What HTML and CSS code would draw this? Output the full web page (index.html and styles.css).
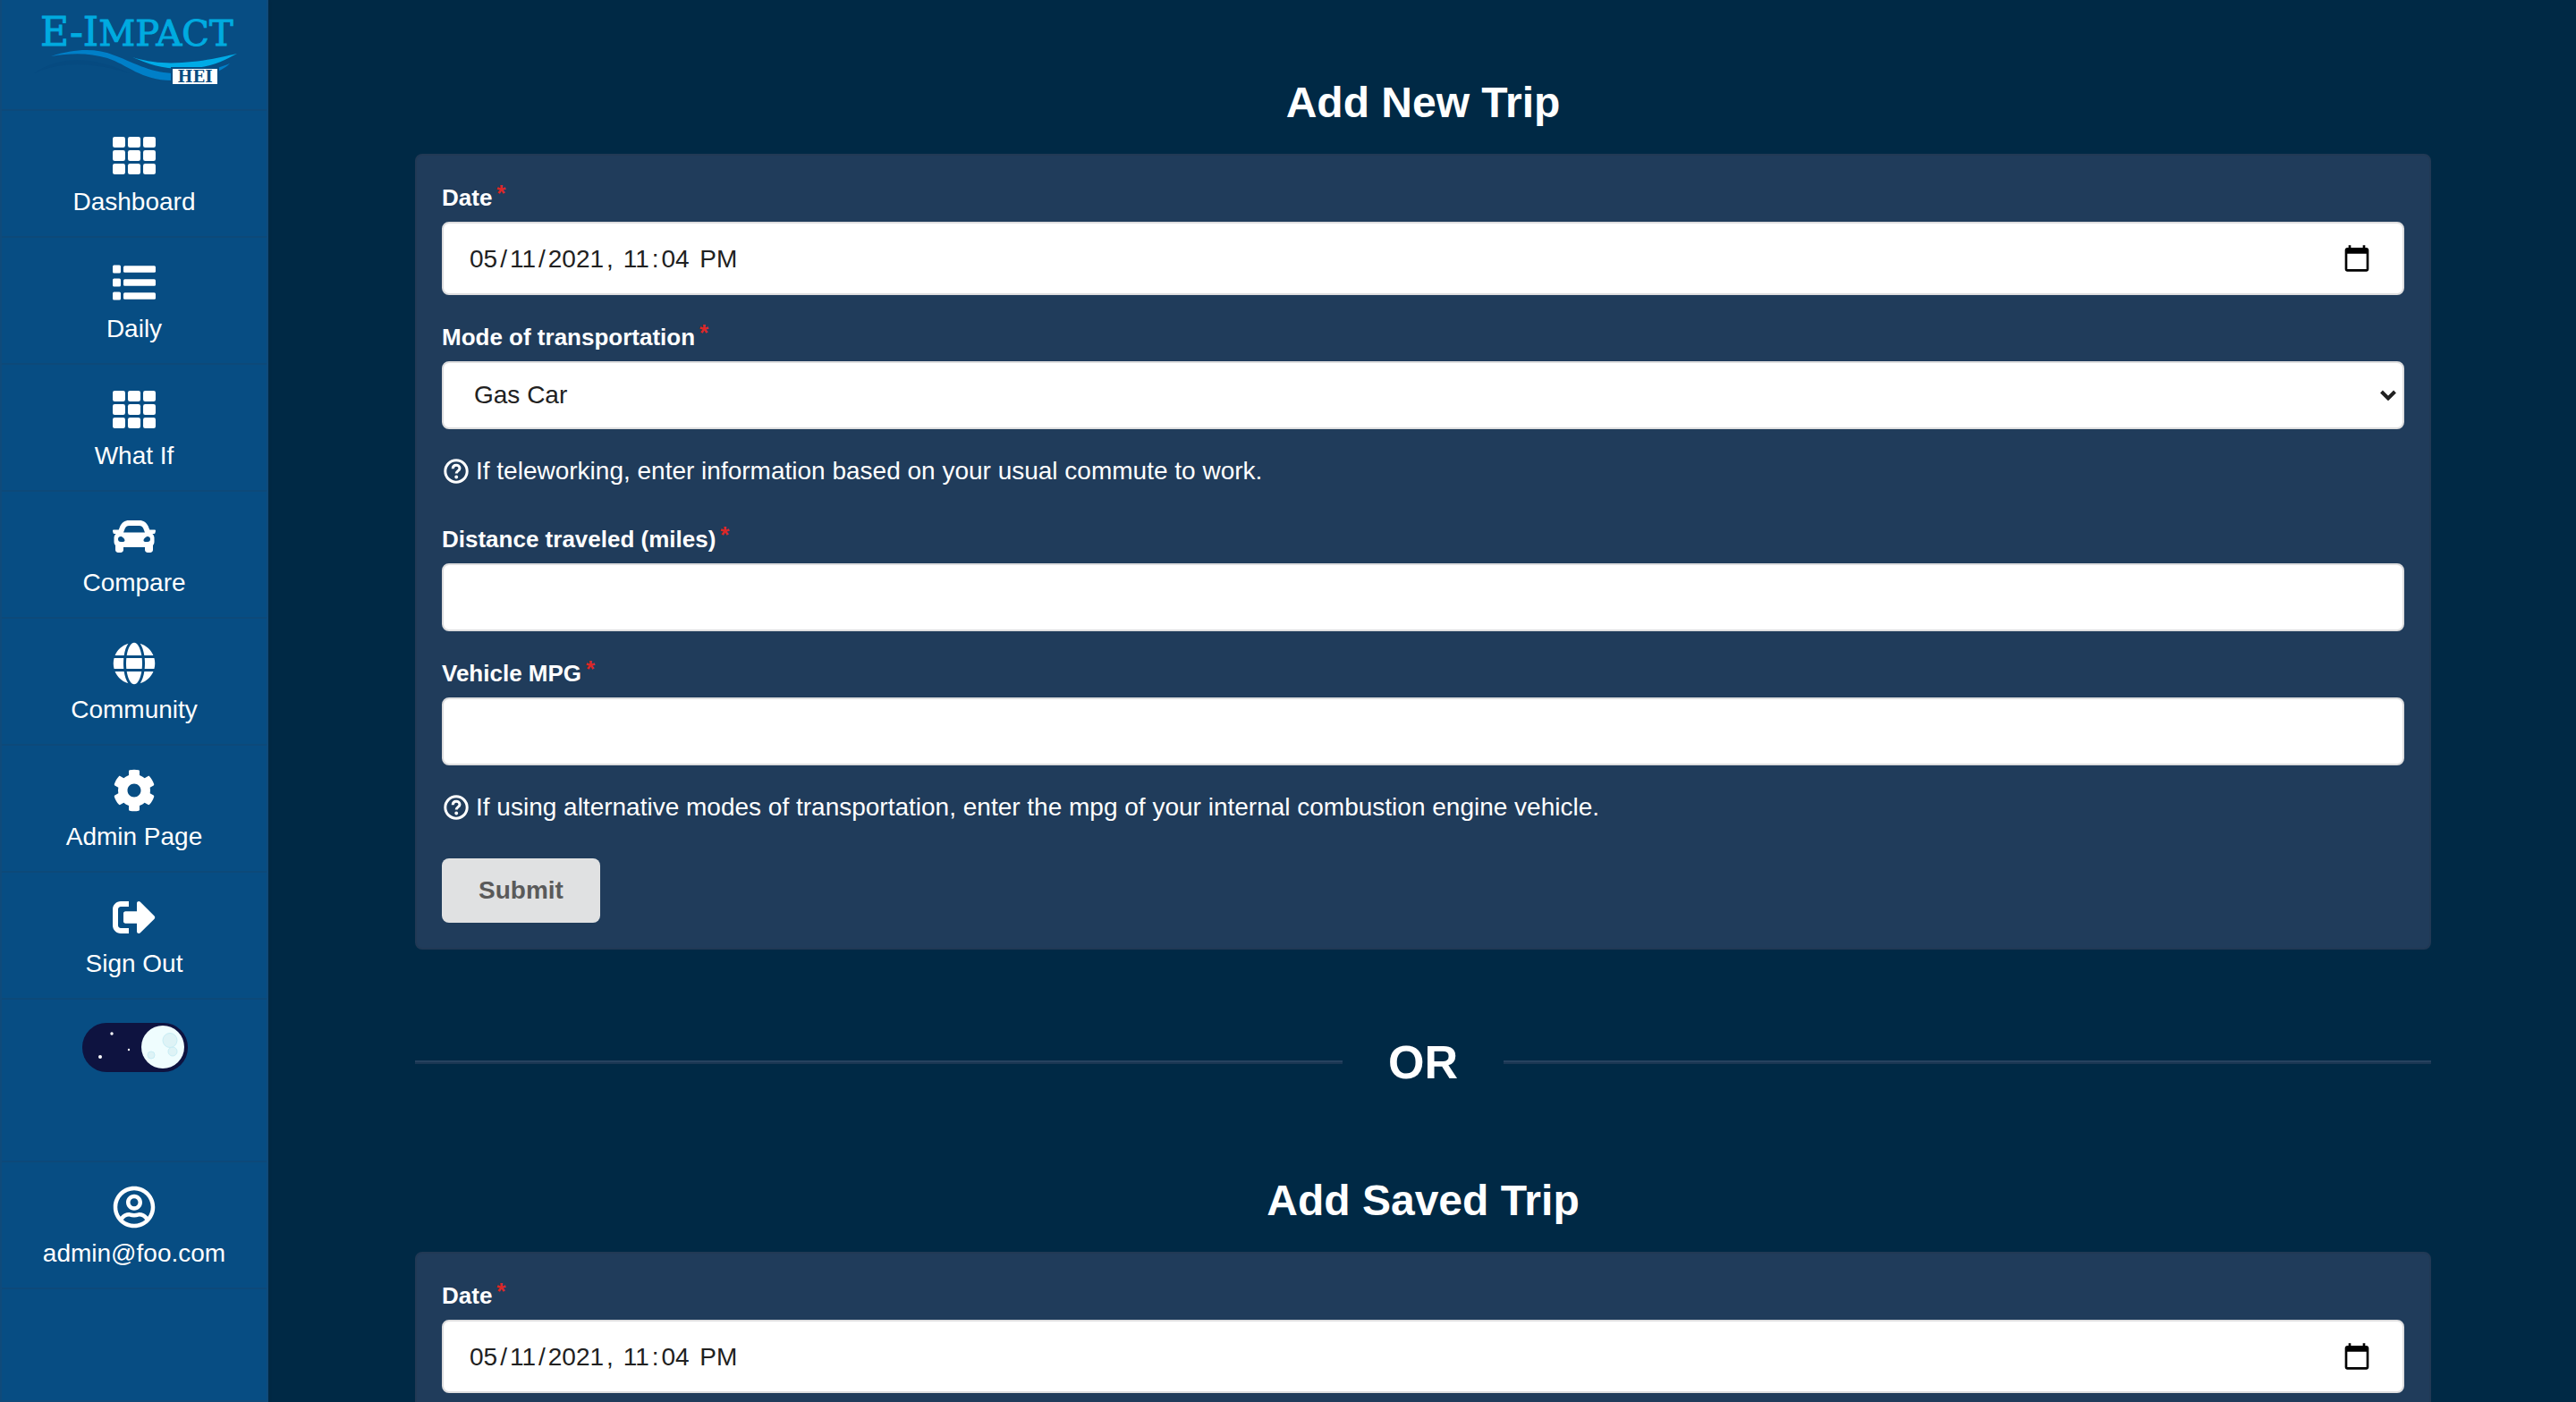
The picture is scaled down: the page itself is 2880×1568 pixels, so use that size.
FILE: index.html
```html
<!DOCTYPE html>
<html lang="en">
<head>
<meta charset="utf-8">
<title>E-Impact HEI - Add Trip</title>
<link rel="stylesheet" href="styles.css">
</head>
<body>
<div class="app">
  <nav class="sidebar" aria-label="Main">
    <a class="brand" href="#">
      <svg class="logo" viewBox="0 0 240 95" role="img" aria-label="E-Impact HEI">
        <path d="M8 72C40 50 78 55 115 72C80 62 45 56 8 72Z" fill="#064a80"/>
        <path d="M27 53C55 44 78 44 98 52C125 62 140 73 172 72C195 71 212 67 227 61C215 72 192 80 162 80C128 80 112 62 90 55C70 49 50 49 27 53Z" fill="#007fc8"/>
        <path d="M118 54C145 62 165 61 185 59C205 57 220 53 235 50C220 58 205 66 175 67C150 67 135 61 118 54Z" fill="#00abe6"/>
        <text x="15" y="41" class="logo-word"><tspan class="logo-initial">E-I</tspan>MPACT</text>
        <rect x="162" y="66" width="52" height="19" fill="#fff" stroke="#074d83" stroke-width="2"/>
        <text x="188" y="82" text-anchor="middle" class="logo-hei">HEI</text>
      </svg>
    </a>
    <a class="item" href="#">
      <svg class="icon" viewBox="0 0 512 512" aria-hidden="true"><g><rect x="0" y="32" width="149" height="128" rx="24"/><rect x="181" y="32" width="150" height="128" rx="24"/><rect x="363" y="32" width="149" height="128" rx="24"/><rect x="0" y="192" width="149" height="128" rx="24"/><rect x="181" y="192" width="150" height="128" rx="24"/><rect x="363" y="192" width="149" height="128" rx="24"/><rect x="0" y="352" width="149" height="128" rx="24"/><rect x="181" y="352" width="150" height="128" rx="24"/><rect x="363" y="352" width="149" height="128" rx="24"/></g></svg>
      <span>Dashboard</span>
    </a>
    <a class="item" href="#">
      <svg class="icon" viewBox="0 0 512 512" aria-hidden="true"><rect x="0" y="48" width="96" height="96" rx="16"/><rect x="0" y="208" width="96" height="96" rx="16"/><rect x="0" y="368" width="96" height="96" rx="16"/><rect x="128" y="56" width="384" height="80" rx="16"/><rect x="128" y="216" width="384" height="80" rx="16"/><rect x="128" y="376" width="384" height="80" rx="16"/></svg>
      <span>Daily</span>
    </a>
    <a class="item" href="#">
      <svg class="icon" viewBox="0 0 512 512" aria-hidden="true"><g><rect x="0" y="32" width="149" height="128" rx="24"/><rect x="181" y="32" width="150" height="128" rx="24"/><rect x="363" y="32" width="149" height="128" rx="24"/><rect x="0" y="192" width="149" height="128" rx="24"/><rect x="181" y="192" width="150" height="128" rx="24"/><rect x="363" y="192" width="149" height="128" rx="24"/><rect x="0" y="352" width="149" height="128" rx="24"/><rect x="181" y="352" width="150" height="128" rx="24"/><rect x="363" y="352" width="149" height="128" rx="24"/></g></svg>
      <span>What If</span>
    </a>
    <a class="item" href="#">
      <svg class="icon" viewBox="0 0 512 512" aria-hidden="true"><path d="M499.99 176h-59.87l-16.64-41.6C406.38 91.63 365.57 64 319.5 64h-127c-46.06 0-86.88 27.63-103.99 70.4L71.87 176H12.01C4.2 176-1.53 183.34.37 190.91l6 24C7.7 220.25 12.5 224 18.01 224h20.07C24.65 235.73 16 252.78 16 272v48c0 16.12 6.16 30.67 16 41.93V416c0 17.67 14.33 32 32 32h32c17.67 0 32-14.33 32-32v-32h256v32c0 17.67 14.33 32 32 32h32c17.67 0 32-14.33 32-32v-54.07c9.84-11.25 16-25.8 16-41.93v-48c0-19.22-8.65-36.27-22.07-48H494c5.51 0 10.31-3.75 11.64-9.09l6-24c1.89-7.57-3.84-14.91-11.65-14.91zm-352.06-17.83c7.29-18.22 24.94-30.17 44.57-30.17h127c19.63 0 37.28 11.95 44.57 30.17L384 208H128l19.93-49.83zM96 319.8c-19.2 0-32-12.76-32-31.9S76.8 256 96 256s48 28.71 48 47.85-28.8 15.95-48 15.95zm320 0c-19.2 0-48 3.19-48-15.95S396.8 256 416 256s32 12.76 32 31.9-12.8 31.9-32 31.9z"/></svg>
      <span>Compare</span>
    </a>
    <a class="item" href="#">
      <svg class="icon" viewBox="0 0 496 512" aria-hidden="true"><path d="M336.500 160C322 70.700 287.800 8 248 8s-74 62.700-88.500 152h177zM152 256c0 22.200 1.200 43.500 3.300 64h185.300c2.100-20.500 3.300-41.800 3.300-64s-1.200-43.500-3.300-64H155.300c-2.100 20.500-3.300 41.800-3.300 64zm324.700-96c-28.600-67.900-86.500-120.400-158-141.600 24.400 33.800 41.200 84.700 50 141.600h108zM177.200 18.400C105.800 39.600 47.800 92.100 19.300 160h108c8.700-56.900 25.500-107.800 49.900-141.600zM487.400 192H372.700c2.100 21 3.300 42.500 3.300 64s-1.200 43-3.300 64h114.600c5.500-20.500 8.600-41.800 8.600-64s-3.100-43.500-8.500-64zM120 256c0-21.500 1.200-43 3.300-64H8.600C3.200 212.500 0 233.800 0 256s3.200 43.500 8.600 64h114.600c-2-21-3.200-42.500-3.200-64zm39.500 96c14.500 89.300 48.700 152 88.500 152s74-62.700 88.500-152h-177zm159.300 141.600c71.400-21.200 129.400-73.700 158-141.600h-108c-8.800 56.900-25.600 107.800-50 141.600zM19.300 352c28.600 67.900 86.500 120.400 158 141.600-24.400-33.800-41.200-84.700-50-141.600h-108z"/></svg>
      <span>Community</span>
    </a>
    <a class="item" href="#">
      <svg class="icon" viewBox="0 0 512 512" aria-hidden="true"><path d="M487.400 315.700l-42.600-24.600c4.300-23.200 4.300-47 0-70.200l42.600-24.600c4.900-2.800 7.100-8.600 5.500-14-11.100-35.600-30-67.800-54.700-94.600-3.800-4.100-10-5.100-14.800-2.300L380.800 110c-17.900-15.400-38.500-27.300-60.800-35.100V25.800c0-5.600-3.900-10.500-9.400-11.700-36.700-8.200-74.300-7.800-109.200 0-5.500 1.200-9.400 6.100-9.400 11.700V75c-22.200 7.900-42.800 19.800-60.800 35.100L88.700 85.500c-4.900-2.800-11-1.900-14.800 2.300-24.700 26.700-43.600 58.900-54.700 94.600-1.700 5.400.6 11.200 5.500 14L67.300 221c-4.300 23.200-4.300 47 0 70.200l-42.600 24.600c-4.900 2.800-7.100 8.600-5.500 14 11.100 35.600 30 67.800 54.700 94.600 3.800 4.100 10 5.100 14.800 2.300l42.600-24.600c17.900 15.400 38.500 27.300 60.800 35.100v49.200c0 5.600 3.900 10.500 9.400 11.700 36.700 8.200 74.300 7.800 109.200 0 5.500-1.200 9.400-6.100 9.400-11.700v-49.200c22.200-7.900 42.800-19.800 60.800-35.100l42.600 24.600c4.900 2.800 11 1.900 14.800-2.300 24.700-26.700 43.600-58.900 54.700-94.600 1.500-5.500-.7-11.300-5.600-14.100zM256 336c-44.100 0-80-35.900-80-80s35.900-80 80-80 80 35.900 80 80-35.900 80-80 80z"/></svg>
      <span>Admin Page</span>
    </a>
    <a class="item" href="#">
      <svg class="icon" viewBox="0 0 512 512" aria-hidden="true"><path d="M192 64H96C43 64 0 107 0 160v192c0 53 43 96 96 96h96v-64H96c-17.700 0-32-14.300-32-32V160c0-17.700 14.300-32 32-32h96zM288 424V328H152c-13.300 0-24-10.700-24-24v-96c0-13.300 10.700-24 24-24h136V88c0-21.400 25.900-32 41-17l168 169c9.300 9.400 9.300 24.500 0 34L329 441c-15 15-41 4.500-41-17z"/></svg>
      <span>Sign Out</span>
    </a>
    <div class="item item-toggle">
      <input class="theme-toggle" type="checkbox" id="dark-mode" aria-label="Dark mode" checked>
      <label class="toggle" for="dark-mode">
        <svg class="toggle-art" viewBox="0 0 118 55" aria-hidden="true"><rect width="118" height="55" rx="27" fill="#0e1340"/><g fill="#fff"><circle cx="33" cy="12" r="1.700"/><circle cx="20" cy="38" r="2"/><circle cx="52" cy="30" r="1.200"/></g><circle cx="90" cy="27" r="24" fill="#effdfe"/><g fill="#def3f6" stroke="#c8edf5" stroke-width="1"><circle cx="101" cy="32" r="5"/><circle cx="98" cy="19.500" r="8"/><circle cx="77" cy="36" r="4"/></g></svg>
      </label>
    </div>
    <a class="item" href="#">
      <svg class="icon" viewBox="0 0 496 512" aria-hidden="true"><path d="M248 104c-53 0-96 43-96 96s43 96 96 96 96-43 96-96-43-96-96-96zm0 144c-26.500 0-48-21.500-48-48s21.500-48 48-48 48 21.500 48 48-21.500 48-48 48zm0-240C111 8 0 119 0 256s111 248 248 248 248-111 248-248S385 8 248 8zm0 448c-49.700 0-95.100-18.300-130.100-48.400 14.900-23 40.400-38.600 69.600-39.500 20.800 6.400 40.600 9.600 60.500 9.600s39.700-3.100 60.500-9.600c29.200 1 54.700 16.500 69.600 39.500-35 30.100-80.400 48.400-130.100 48.400zm162.700-84.100c-24.400-31.400-62.100-51.900-105.100-51.900-10.200 0-26 9.600-57.600 9.600-31.500 0-47.400-9.600-57.600-9.600-42.900 0-80.600 20.500-105.100 51.900C61.900 339.200 48 299.200 48 256c0-110.300 89.700-200 200-200s200 89.700 200 200c0 43.200-13.900 83.200-37.300 115.900z"/></svg>
      <span>admin@foo.com</span>
    </a>
  </nav>

  <main class="content">
    <section>
      <h1 class="title">Add New Trip</h1>
      <form class="card">
        <div class="field">
          <label class="label" for="new-date">Date<span class="req">*</span></label>
          <input class="control control-date" id="new-date" type="datetime-local" value="2021-05-11T23:04">
        </div>
        <div class="field">
          <label class="label" for="new-mode">Mode of transportation<span class="req">*</span></label>
          <div class="select">
            <select class="control control-select" id="new-mode"><option>Gas Car</option></select>
            <svg class="chevron" viewBox="0 0 18 12" aria-hidden="true"><path d="M1.500 2L9 9.500L16.500 2"/></svg>
          </div>
        </div>
        <p class="hint"><svg class="hint-icon" viewBox="0 0 28 28" aria-hidden="true"><circle cx="14" cy="14" r="12.200"/><path d="M10.200 11.200C10.400 5.800 18 6.300 18 10.700C18 13.600 14.200 13.600 14.200 16.400"/><circle class="dot" cx="14.200" cy="20.500" r="1.900"/></svg>If teleworking, enter information based on your usual commute to work.</p>
        <div class="field">
          <label class="label" for="new-distance">Distance traveled (miles)<span class="req">*</span></label>
          <input class="control" id="new-distance" type="text">
        </div>
        <div class="field">
          <label class="label" for="new-mpg">Vehicle MPG<span class="req">*</span></label>
          <input class="control" id="new-mpg" type="text">
        </div>
        <p class="hint"><svg class="hint-icon" viewBox="0 0 28 28" aria-hidden="true"><circle cx="14" cy="14" r="12.200"/><path d="M10.200 11.200C10.400 5.800 18 6.300 18 10.700C18 13.600 14.200 13.600 14.200 16.400"/><circle class="dot" cx="14.200" cy="20.500" r="1.900"/></svg>If using alternative modes of transportation, enter the mpg of your internal combustion engine vehicle.</p>
        <button class="submit" type="submit">Submit</button>
      </form>
    </section>

    <div class="divider">OR</div>

    <section>
      <h1 class="title">Add Saved Trip</h1>
      <form class="card">
        <div class="field">
          <label class="label" for="saved-date">Date<span class="req">*</span></label>
          <input class="control control-date" id="saved-date" type="datetime-local" value="2021-05-11T23:04">
        </div>
      </form>
    </section>
  </main>
</div>
</body>
</html>
```
FILE: styles.css
```css
* {
  box-sizing: border-box;
}

body {
  margin: 0;
  background: #002945;
  color: #fff;
  font: 28px/40px "Liberation Sans", Arial, sans-serif;
}

.app {
  display: flex;
  height: 100vh;
  overflow: hidden;
}

/* Sidebar */
.sidebar {
  flex: 0 0 300px;
  display: flex;
  flex-direction: column;
  border: 2px solid #104a7a;
  border-top: 0;
  background: #074d83;
  box-shadow: 0 2px 4px rgba(34, 36, 38, 0.15);
}

.brand {
  height: 124px;
  padding: 10px 28px;
  border-bottom: 2px solid #0d4979;
}

.logo {
  display: block;
  width: 240px;
  height: 95px;
}

.logo-word {
  fill: #00abe0;
  stroke: #00abe0;
  stroke-width: 1;
  font: 40px "DejaVu Serif", serif;
}

.logo-initial {
  font-size: 44px;
}

.logo-hei {
  fill: #0a4c80;
  font: bold 18px "DejaVu Serif", serif;
}

.item {
  display: flex;
  flex-direction: column;
  align-items: center;
  gap: 14px;
  padding: 26px 0 24px;
  border-bottom: 2px solid #0d4979;
  color: #fff;
  line-height: 28px;
  text-decoration: none;
}

.icon {
  width: 48px;
  height: 48px;
  fill: currentColor;
}

.item-toggle {
  height: 182px;
  padding-left: 2px;
  position: relative;
}

.theme-toggle {
  position: absolute;
  opacity: 0;
}

.toggle,
.toggle-art {
  display: block;
  width: 118px;
  height: 55px;
}

/* Trip forms */
.content {
  flex: 1;
  padding: 84px 162px 0 164px;
}

.title {
  margin: 0 0 26px;
  font-size: 48px;
  line-height: 62px;
  text-align: center;
}

.card {
  padding: 28px;
  border: 2px solid #213955;
  border-radius: 8px;
  background: #203c5b;
}

.field {
  margin-bottom: 28px;
}

.label {
  display: block;
  margin-bottom: 8px;
  font-size: 26px;
  font-weight: bold;
  line-height: 38px;
}

.req {
  display: inline-block;
  margin-left: 5px;
  color: #db2828;
  line-height: 26px;
  vertical-align: 5px;
}

.control {
  display: block;
  width: 100%;
  height: 76px;
  padding: 0 28px;
  border: 2px solid #dededf;
  border-radius: 8px;
  background: #fff;
  color: #212121;
  font: inherit;
}

.control-date {
  height: 82px;
  padding: 2px 30px 0 26px;
}

.control-date::-webkit-datetime-edit-month-field,
.control-date::-webkit-datetime-edit-day-field,
.control-date::-webkit-datetime-edit-year-field,
.control-date::-webkit-datetime-edit-hour-field,
.control-date::-webkit-datetime-edit-minute-field,
.control-date::-webkit-datetime-edit-ampm-field {
  padding: 0 3px;
}

.control-date::-webkit-calendar-picker-indicator {
  width: 34px;
  height: 34px;
  padding: 4px;
}

.select {
  display: grid;
  align-items: center;
}

.select > * {
  grid-area: 1 / 1;
}

.control-select {
  padding: 0 34px;
  appearance: none;
}

.chevron {
  justify-self: end;
  width: 18px;
  height: 12px;
  margin-right: 9px;
  fill: none;
  stroke: #212121;
  stroke-width: 4;
  pointer-events: none;
}

.hint {
  display: flex;
  align-items: center;
  gap: 10px;
  margin: 0 0 38px;
  line-height: 38px;
}

.hint-icon {
  width: 28px;
  height: 28px;
  margin-left: 2px;
  margin-right: -2px;
  fill: none;
  stroke: currentColor;
  stroke-width: 3;
}

.dot {
  fill: currentColor;
  stroke: none;
}

.submit {
  display: block;
  height: 72px;
  padding: 0 41px;
  border: 0;
  border-radius: 8px;
  background: #e0e1e2;
  color: #5a5a5a;
  font: inherit;
  font-weight: bold;
}

.divider {
  display: flex;
  align-items: center;
  gap: 51px;
  margin: 92px 0 90px;
  font-size: 52px;
  font-weight: bold;
  line-height: 68px;
}

.divider::before,
.divider::after {
  content: "";
  flex: 1;
  border-top: 2px solid #26425f;
  border-bottom: 2px solid #1a3652;
}
```
